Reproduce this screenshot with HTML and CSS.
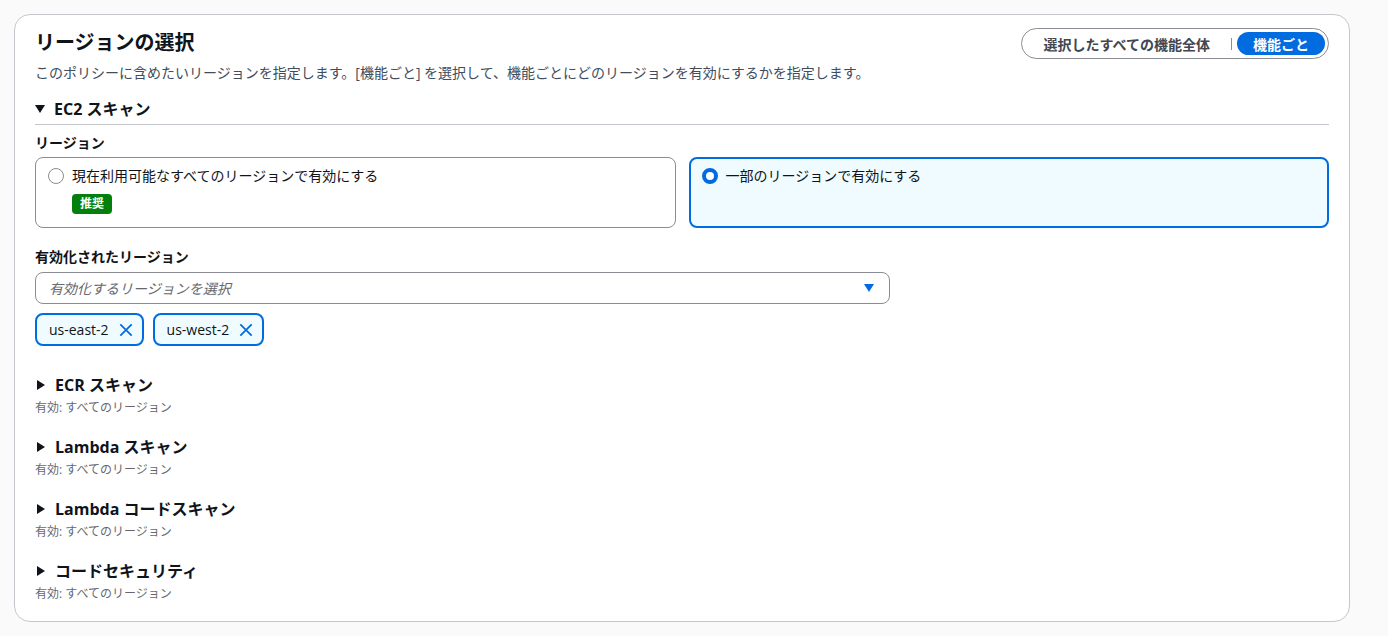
FILE: index.html
```html
<!DOCTYPE html>
<html lang="ja">
<head>
    <meta charset="utf-8">
    <title>リージョンの選択</title>
    <link rel="stylesheet" href="styles.css">
</head>
<body>
    <div class="panel">
        <div class="panel-header">
            <div class="header-text">
                <h2 class="title">リージョンの選択</h2>
                <p class="desc">このポリシーに含めたいリージョンを指定します。[機能ごと] を選択して、機能ごとにどのリージョンを有効にするかを指定します。</p>
            </div>
            <div class="segmented">
                <button class="seg">選択したすべての機能全体</button>
                <span class="seg-sep"></span>
                <button class="seg active">機能ごと</button>
            </div>
        </div>

        <div class="section open">
            <div class="section-head">
                <span class="caret down"></span>
                <span>EC2 スキャン</span>
            </div>
            <div class="section-body">
                <div class="label">リージョン</div>
                <div class="tiles">
                    <div class="tile">
                        <div class="tile-row">
                            <span class="radio"></span>
                            <span>現在利用可能なすべてのリージョンで有効にする</span>
                        </div>
                        <span class="badge">推奨</span>
                    </div>
                    <div class="tile selected">
                        <div class="tile-row">
                            <span class="radio checked"></span>
                            <span>一部のリージョンで有効にする</span>
                        </div>
                    </div>
                </div>

                <div class="label label-select">有効化されたリージョン</div>
                <div class="select">
                    <span class="placeholder">有効化するリージョンを選択</span>
                    <span class="select-caret"></span>
                </div>
                <div class="tokens">
                    <div class="token">us-east-2
                        <svg width="14" height="14" viewBox="0 0 16 16"><path d="M1.5 1.5l13 13M14.5 1.5l-13 13" stroke="#006ce0" stroke-width="2" fill="none"/></svg>
                    </div>
                    <div class="token">us-west-2
                        <svg width="14" height="14" viewBox="0 0 16 16"><path d="M1.5 1.5l13 13M14.5 1.5l-13 13" stroke="#006ce0" stroke-width="2" fill="none"/></svg>
                    </div>
                </div>
            </div>
        </div>

        <div class="section">
            <div class="section-head"><span class="caret"></span><span>ECR スキャン</span></div>
            <div class="sub">有効: すべてのリージョン</div>
        </div>
        <div class="section">
            <div class="section-head"><span class="caret"></span><span>Lambda スキャン</span></div>
            <div class="sub">有効: すべてのリージョン</div>
        </div>
        <div class="section">
            <div class="section-head"><span class="caret"></span><span>Lambda コードスキャン</span></div>
            <div class="sub">有効: すべてのリージョン</div>
        </div>
        <div class="section">
            <div class="section-head"><span class="caret"></span><span>コードセキュリティ</span></div>
            <div class="sub">有効: すべてのリージョン</div>
        </div>
    </div>
</body>
</html>
```

FILE: styles.css
```css
body {
    margin: 0;
    padding: 14px 38px 14px 14px;
    background-color: #fafafa;
    font-family: "Open Sans", "Noto Sans CJK JP", sans-serif;
    color: #0f141a;
}
.panel {
    background-color: #fff;
    border: 1px solid #c6c6cd;
    border-radius: 16px;
    padding: 12px 20px 20px 20px;
    height: 574px;
}
.panel-header {
    display: flex;
    justify-content: space-between;
    align-items: flex-start;
}
.title {
    margin: 0;
    font-size: 20px;
    font-weight: 700;
    line-height: 32px;
}
.desc {
    margin: 3px 0 0 0;
    font-size: 14px;
    line-height: 22px;
    color: #414d5c;
}
.segmented {
    display: flex;
    align-items: center;
    border: 1px solid #8c8c94;
    border-radius: 16px;
    padding: 3px 3px 3px 4px;
    margin-top: 1px;
}
.seg {
    border: none;
    background: none;
    font-family: inherit;
    font-size: 14px;
    font-weight: 700;
    color: #424650;
    padding: 0 17px 0 18px;
    height: 23px;
    border-radius: 12px;
    cursor: pointer;
}
.seg-sep {
    width: 1px;
    height: 12px;
    background-color: #8c8c94;
    margin: 0 5px 0 4px;
}
.seg.active {
    background-color: #006ce0;
    color: #fff;
    padding: 0 16px;
}
.section {
    margin-top: 20px;
}
.section.open {
    margin-top: 14px;
}
.section.open + .section {
    margin-top: 28px;
}
.section-head {
    display: flex;
    align-items: center;
    gap: 10px;
    font-size: 16px;
    font-weight: 700;
    line-height: 22px;
}
.open .section-head {
    border-bottom: 1px solid #c6c6cd;
    padding-bottom: 4px;
    gap: 9px;
}
.caret {
    width: 0;
    height: 0;
    border-top: 5px solid transparent;
    border-bottom: 5px solid transparent;
    border-left: 8px solid #0f141a;
    margin-left: 2px;
}
.caret.down {
    border-left: 5px solid transparent;
    border-right: 5px solid transparent;
    border-top: 8px solid #0f141a;
    border-bottom: none;
    margin-left: 0;
}
.sub {
    font-size: 12px;
    line-height: 16px;
    color: #656871;
    margin-top: 4px;
}
.label {
    font-size: 14px;
    font-weight: 700;
    line-height: 20px;
    margin-top: 8px;
    margin-bottom: 4px;
}
.label-select {
    margin-bottom: 5px;
}
.tiles {
    display: grid;
    grid-template-columns: 1fr 1fr;
    gap: 13px;
    margin-bottom: 19px;
}
.tile {
    border: 1px solid #8c8c94;
    border-radius: 8px;
    padding: 7px 12px;
    box-sizing: border-box;
    height: 71px;
}
.tile.selected {
    border: 2px solid #006ce0;
    background-color: #f0fbff;
    padding: 6px 11px;
}
.tile-row {
    display: flex;
    align-items: center;
    gap: 8px;
    font-size: 14px;
    line-height: 22px;
    color: #0f141a;
}
.radio {
    width: 16px;
    height: 16px;
    border: 1px solid #8c8c94;
    border-radius: 50%;
    box-sizing: border-box;
}
.radio.checked {
    border: 4px solid #006ce0;
    background-color: #fff;
}
.badge {
    display: inline-block;
    margin: 7px 0 0 24px;
    background-color: #037f0c;
    color: #fff;
    font-size: 12px;
    font-weight: 700;
    line-height: 20px;
    padding: 0 8px;
    border-radius: 4px;
}
.select {
    width: 855px;
    height: 32px;
    box-sizing: border-box;
    border: 1px solid #8c8c94;
    border-radius: 8px;
    display: flex;
    align-items: center;
    justify-content: space-between;
    padding: 0 15px 0 13px;
}
.placeholder {
    font-size: 14px;
    font-style: italic;
    color: #656871;
}
.select-caret {
    width: 0;
    height: 0;
    border-left: 5px solid transparent;
    border-right: 5px solid transparent;
    border-top: 8px solid #006ce0;
}
.tokens {
    display: flex;
    gap: 9px;
    margin-top: 9px;
}
.token {
    display: flex;
    align-items: center;
    gap: 10px;
    border: 2px solid #006ce0;
    border-radius: 8px;
    background-color: #f0fbff;
    height: 33px;
    box-sizing: border-box;
    padding: 0 9px 0 12px;
    font-size: 14px;
    color: #0f141a;
}
```
